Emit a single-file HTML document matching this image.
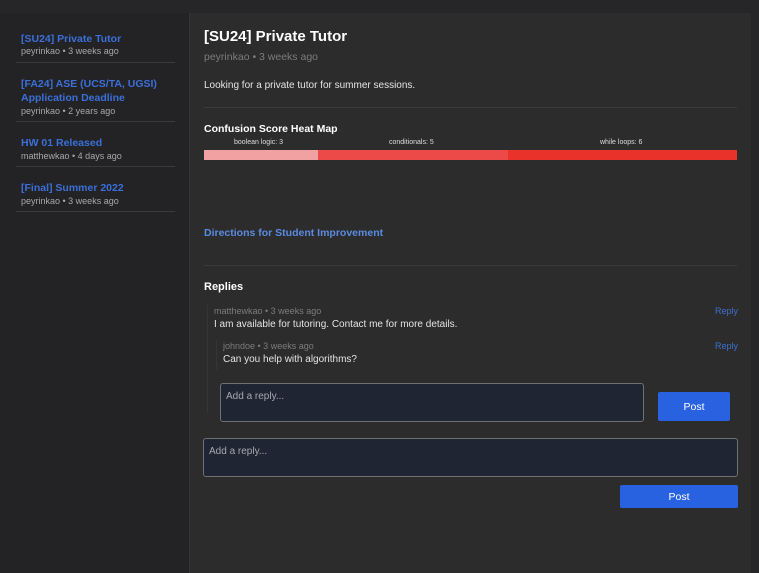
<!DOCTYPE html>
<html><head><style>
*{box-sizing:border-box;margin:0;padding:0}
body{width:759px;height:573px;background:#262628;font-family:"Liberation Sans",sans-serif;position:relative;overflow:hidden}
.a{position:absolute;white-space:nowrap}
.side{position:absolute;left:0;top:13px;width:189px;height:560px;background:#232325}
.main{position:absolute;left:189px;top:13px;width:562px;height:560px;background:#2c2c2c;border-left:1px solid #333}
.edge{position:absolute;left:751px;top:13px;width:8px;height:560px;background:#262628}
.st{color:#3b6fd9;font-weight:bold;font-size:10.5px}
.sm{color:#a8a8a8;font-size:9px}
.hr{position:absolute;height:1px;background:#3a3a3c}
.ta{position:absolute;background:#1f2533;border:1px solid #707070;border-radius:3px;color:#a5a8ae;font-size:10px;padding:7px 5px}
.btn{position:absolute;background:#2962e0;color:#fff;font-size:10.5px;border-radius:2px;display:flex;align-items:center;justify-content:center}
</style></head><body>
<div class="side"></div>
<div class="main"></div>
<div class="edge"></div>

<div class="a st" style="left:21px;top:33px">[SU24] Private Tutor</div>
<div class="a sm" style="left:21px;top:46px">peyrinkao • 3 weeks ago</div>
<div class="hr" style="left:16px;top:62px;width:159px"></div>
<div class="a st" style="left:21px;top:78px">[FA24] ASE (UCS/TA, UGSI)</div>
<div class="a st" style="left:21px;top:92px">Application Deadline</div>
<div class="a sm" style="left:21px;top:106px">peyrinkao • 2 years ago</div>
<div class="hr" style="left:16px;top:121px;width:159px"></div>
<div class="a st" style="left:21px;top:137px">HW 01 Released</div>
<div class="a sm" style="left:21px;top:151px">matthewkao • 4 days ago</div>
<div class="hr" style="left:16px;top:166px;width:159px"></div>
<div class="a st" style="left:21px;top:182px">[Final] Summer 2022</div>
<div class="a sm" style="left:21px;top:196px">peyrinkao • 3 weeks ago</div>
<div class="hr" style="left:16px;top:211px;width:159px"></div>

<div class="a" style="left:204px;top:28px;color:#fff;font-weight:bold;font-size:15px">[SU24] Private Tutor</div>
<div class="a" style="left:204px;top:51px;color:#7c7c7e;font-size:10.5px">peyrinkao • 3 weeks ago</div>
<div class="a" style="left:204px;top:80px;color:#e4e4e4;font-size:10px">Looking for a private tutor for summer sessions.</div>
<div class="hr" style="left:204px;top:107px;width:533px"></div>
<div class="a" style="left:204px;top:123px;color:#fff;font-weight:bold;font-size:10.5px">Confusion Score Heat Map</div>
<div class="a" style="left:234px;top:139px;color:#ddd;font-size:7px">boolean logic: 3</div>
<div class="a" style="left:389px;top:139px;color:#ddd;font-size:7px">conditionals: 5</div>
<div class="a" style="left:600px;top:139px;color:#ddd;font-size:7px">while loops: 6</div>
<div class="a" style="left:204px;top:150px;width:114px;height:10px;background:#f1a1a1"></div>
<div class="a" style="left:318px;top:150px;width:190px;height:10px;background:#ec4a48"></div>
<div class="a" style="left:508px;top:150px;width:229px;height:10px;background:#e9322a"></div>
<div class="a" style="left:204px;top:227px;color:#5b8be0;font-weight:bold;font-size:10.5px">Directions for Student Improvement</div>
<div class="hr" style="left:204px;top:265px;width:533px"></div>
<div class="a" style="left:204px;top:281px;color:#fff;font-weight:bold;font-size:11px">Replies</div>

<div class="a" style="left:207px;top:305px;width:1px;height:108px;background:#353537"></div>
<div class="a" style="left:214px;top:306px;color:#7c7c7e;font-size:9px">matthewkao • 3 weeks ago</div>
<div class="a" style="left:715px;top:306px;color:#3f6fd0;font-size:9px">Reply</div>
<div class="a" style="left:214px;top:319px;color:#e4e4e4;font-size:10px">I am available for tutoring. Contact me for more details.</div>
<div class="a" style="left:216px;top:340px;width:1px;height:30px;background:#353537"></div>
<div class="a" style="left:223px;top:341px;color:#7c7c7e;font-size:9px">johndoe • 3 weeks ago</div>
<div class="a" style="left:715px;top:341px;color:#3f6fd0;font-size:9px">Reply</div>
<div class="a" style="left:223px;top:354px;color:#e4e4e4;font-size:10px">Can you help with algorithms?</div>

<div class="ta" style="left:220px;top:383px;width:424px;height:39px">Add a reply...</div>
<div class="btn" style="left:658px;top:392px;width:72px;height:29px">Post</div>
<div class="ta" style="left:203px;top:438px;width:535px;height:39px">Add a reply...</div>
<div class="btn" style="left:620px;top:485px;width:118px;height:23px">Post</div>
</body></html>
